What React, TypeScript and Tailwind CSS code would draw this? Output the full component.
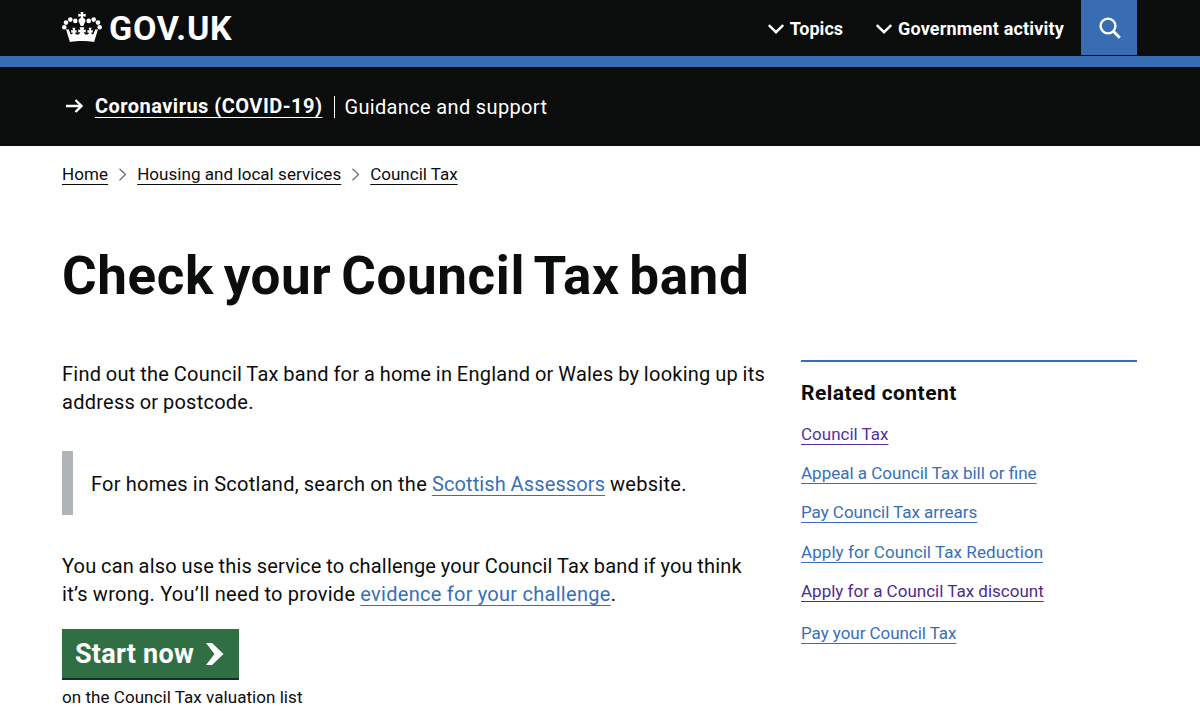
const relatedLinks = [
    { label: "Council Tax", className: "text-[#54319f] mb-[19px]" },
    { label: "Appeal a Council Tax bill or fine", className: "text-[#386fb9] mb-[19px]" },
    { label: "Pay Council Tax arrears", className: "text-[#386fb9] tracking-[-0.04px] mb-[20px]" },
    { label: "Apply for Council Tax Reduction", className: "text-[#386fb9] tracking-[0.07px] mb-[19px]" },
    { label: "Apply for a Council Tax discount", className: "text-[#4c2c92] mb-[22px]" },
    { label: "Pay your Council Tax", className: "text-[#386fb9] tracking-[-0.05px]" },
];

const linkStyle = "underline decoration-[1px] underline-offset-[4px] [text-decoration-skip-ink:none]";

// one side of the crown, drawn twice
function CrownHalf() {
    return (
        <>
            <circle cx="3.3" cy="16.3" r="2.3" />
            <circle cx="5" cy="11.6" r="2.3" />
            <circle cx="9.3" cy="8.6" r="2.3" />
            <circle cx="14.3" cy="9.9" r="2.3" />
            <path d="M21.200 1h-1.700l.5 2.200-2.700-.5v3l2.700-.5-.3 1.800c-1.600.5-2.300 1.800-2.100 3.300.2 1.500 1.500 2.500 2 4.700h1.600z" />
            <path d="M21.200 16.200h-2.600l.8 2.800-2.200-.4v2.900l1.900-.4c-.1 1.200-.8 2.200-2 2.500-1.700.3-3-.7-3.300-2.100l1.600.5.3-2.900-2 .4.600-2.800h-2.900l.7 2.800-2-.4.2 2.700 1.600-.3c-.2 1.100-1 1.900-2.100 2.100l-2.200-5.300c-1 .3-1.900.1-2.700-.4l4 13.200c4.400-.8 8.200-1.100 12.300-1.100z" />
        </>
    );
}

function Crown() {
    return (
        <svg width="42" height="32" viewBox="0 0 42 32" fill="#fff" className="shrink-0">
            <CrownHalf />
            <g transform="translate(42 0) scale(-1 1)">
                <CrownHalf />
            </g>
        </svg>
    );
}

function NavChevron() {
    return (
        <svg width="16" height="10" viewBox="0 0 16 10" fill="none" stroke="#fff" strokeWidth="2.4" className="shrink-0">
            <path d="M.8 1l7.200 7.200L15.200 1" />
        </svg>
    );
}

function CrumbChevron() {
    return (
        <svg width="8" height="13" viewBox="0 0 8 13" fill="none" stroke="#6b7073" strokeWidth="1.3" className="shrink-0">
            <path d="M.5 .8l6 5.700-6 5.700" />
        </svg>
    );
}

export default function App() {
    return (
        <div className="h-[726px] overflow-hidden bg-white text-[#0b0c0c] font-[Roboto,sans-serif]">
            <header className="bg-[#0b0c0c] text-white">
                <div className="h-14 pl-[61px] pr-[63px] flex">
                    <div className="flex pt-[11px]">
                        <Crown />
                        <span className="ml-[6px] text-[34px] leading-[34px] font-bold tracking-[0.8px]">GOV.UK</span>
                    </div>
                    <nav className="ml-auto flex h-[55px]">
                        <a className="flex items-center h-[57px] mr-[33px] text-[18px] font-bold">
                            <NavChevron />
                            <span className="ml-[6px]">Topics</span>
                        </a>
                        <a className="flex items-center h-[57px] mr-[17px] text-[18px] font-bold">
                            <NavChevron />
                            <span className="ml-[6px] tracking-[0.18px]">Government activity</span>
                        </a>
                        <button className="w-14 h-[55px] pl-[2px] bg-[#386db4] flex items-center justify-center">
                            <svg width="22" height="22" viewBox="0 0 22 22" fill="none" stroke="#fff" strokeWidth="2.4">
                                <circle cx="9" cy="9" r="7.4" />
                                <path d="M14.300 14.300l6.500 6.500" strokeWidth="2.8" />
                            </svg>
                        </button>
                    </nav>
                </div>
                <div className="h-[11px] bg-[#386db4]" />
                <div className="h-[79px] pl-[66px] pt-[27px] flex text-[20px] leading-6">
                    <svg width="18" height="14" viewBox="0 0 18 14" fill="none" stroke="#fff" strokeWidth="2.4" className="mt-[5px]">
                        <path d="M0 7h15.500M9.500 1l6 6-6 6" />
                    </svg>
                    <a className={`ml-[11px] font-bold tracking-[0.47px] ${linkStyle}`}>Coronavirus (COVID-19)</a>
                    <span className="ml-[12px] mt-[2px] w-px h-[22px] bg-white" />
                    <span className="ml-[9px] mt-px tracking-[0.35px]">Guidance and support</span>
                </div>
            </header>

            <div className="pl-[62px] pr-[63px]">
                <nav className="h-6 mt-[16px] flex items-center text-[17px] leading-6">
                    <a className={`tracking-[0.1px] ${linkStyle}`}>Home</a>
                    <span className="ml-[11px] mr-[10px]"><CrumbChevron /></span>
                    <a className={`tracking-[0.05px] ${linkStyle}`}>Housing and local services</a>
                    <span className="ml-[11px] mr-[10px]"><CrumbChevron /></span>
                    <a className={linkStyle}>Council Tax</a>
                </nav>

                <h1 className="mt-[60px] text-[53px] leading-[60px] font-bold tracking-[0.6px] [word-spacing:-4px] whitespace-nowrap">Check your Council Tax band</h1>

                <div className="mt-[54px] flex justify-between">
                    <main className="w-[720px] text-[20px] leading-7 whitespace-nowrap">
                        <p className="tracking-[0.25px] [word-spacing:-0.6px]">
                            <span className="block">Find out the Council Tax band for a home in England or Wales by looking up its</span>
                            <span className="block">address or postcode.</span>
                        </p>
                        <div className="mt-[35px] h-16 border-l-[11px] border-[#b1b4b6] pl-[18px] pt-[19px]">
                            <p className="tracking-[0.27px] [word-spacing:-0.35px]">
                                For homes in Scotland, search on the <a className={`text-[#386fb9] tracking-[0.12px] ${linkStyle}`}>Scottish Assessors</a> website.
                            </p>
                        </div>
                        <p className="mt-[37px]">
                            <span className="block tracking-[0.18px] [word-spacing:-0.48px]">You can also use this service to challenge your Council Tax band if you think</span>
                            <span className="block tracking-[0.3px] [word-spacing:-0.3px]">
                                it’s wrong. You’ll need to provide <a className={`text-[#386fb9] ${linkStyle}`}>evidence for your challenge</a>.
                            </span>
                        </p>
                        <button className="mt-[21px] w-[177px] h-[51px] pl-[13px] flex items-center bg-[#2f6f43] border-b-2 border-[#10331f] text-white">
                            <span className="text-[27px] font-bold tracking-[0.25px]">Start now</span>
                            <svg width="18" height="22" viewBox="0 0 18 22" fill="#fff" className="ml-[12px] mt-px">
                                <path d="M0 0h6l11.500 11L6 22H0l8.500-11z" />
                            </svg>
                        </button>
                        <p className="mt-[5px] text-[17px] leading-6 tracking-[0.05px]">on the Council Tax valuation list</p>
                    </main>

                    <aside className="w-[336px] h-fit border-t-2 border-[#386db4] text-[17px] leading-5">
                        <h2 className="mt-[19px] mb-[19px] text-[21px] leading-6 font-bold tracking-[0.45px]">Related content</h2>
                        {relatedLinks.map((link) => (
                            <div key={link.label} className={link.className}>
                                <a className={linkStyle}>{link.label}</a>
                            </div>
                        ))}
                    </aside>
                </div>
            </div>
        </div>
    );
}
